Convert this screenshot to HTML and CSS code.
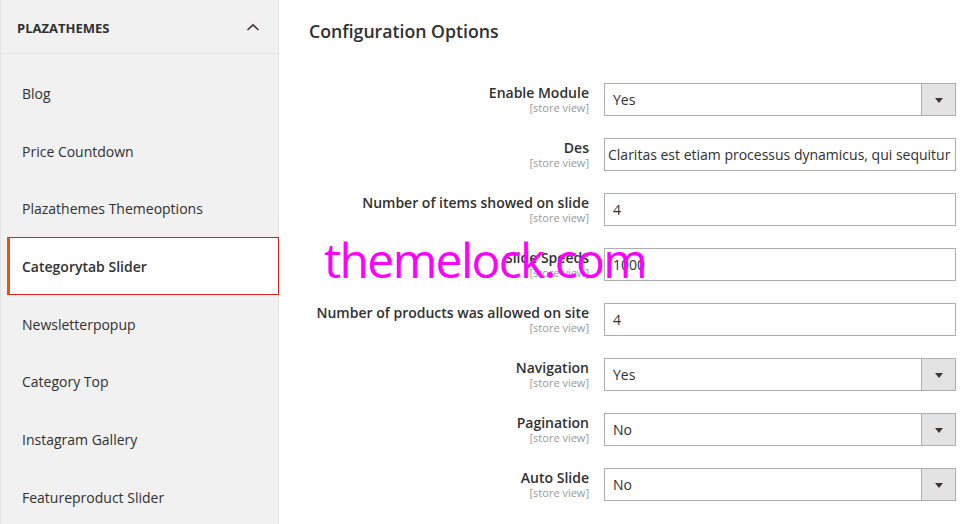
FILE: index.html
```html
<!DOCTYPE html>
<html lang="en">
<head>
<meta charset="utf-8">
<title>Configuration Options</title>
<link rel="stylesheet" href="styles.css">
</head>
<body>
<div class="page">
  <aside class="sidebar">
    <div class="side-head">
      <span class="side-title">PLAZATHEMES</span>
      <svg class="chev" width="14" height="8" viewBox="0 0 14 8"><polyline points="1.5,7 7,1.8 12.5,7" fill="none" stroke="#41362f" stroke-width="1.6"/></svg>
    </div>
    <ul class="nav">
      <li class="nav-item">Blog</li>
      <li class="nav-item">Price Countdown</li>
      <li class="nav-item">Plazathemes Themeoptions</li>
      <li class="nav-item active">Categorytab Slider</li>
      <li class="nav-item">Newsletterpopup</li>
      <li class="nav-item">Category Top</li>
      <li class="nav-item">Instagram Gallery</li>
      <li class="nav-item">Featureproduct Slider</li>
    </ul>
  </aside>
  <main class="content">
    <h2 class="title">Configuration Options</h2>
    <div class="form">
      <div class="row">
        <div class="label"><span class="lbl">Enable Module</span><span class="scope">[store view]</span></div>
        <div class="control select"><span class="val">Yes</span><span class="btn"><i class="tri"></i></span></div>
      </div>
      <div class="row">
        <div class="label"><span class="lbl">Des</span><span class="scope">[store view]</span></div>
        <div class="control scrolled"><span class="val">Claritas est etiam processus dynamicus, qui sequitur mutationem consuetudium lectorum.</span></div>
      </div>
      <div class="row">
        <div class="label"><span class="lbl">Number of items showed on slide</span><span class="scope">[store view]</span></div>
        <div class="control"><span class="val">4</span></div>
      </div>
      <div class="row">
        <div class="label"><span class="lbl">Slide Speeds</span><span class="scope">[store view]</span></div>
        <div class="control"><span class="val">1000</span></div>
      </div>
      <div class="row">
        <div class="label"><span class="lbl">Number of products was allowed on site</span><span class="scope">[store view]</span></div>
        <div class="control"><span class="val">4</span></div>
      </div>
      <div class="row">
        <div class="label"><span class="lbl">Navigation</span><span class="scope">[store view]</span></div>
        <div class="control select"><span class="val">Yes</span><span class="btn"><i class="tri"></i></span></div>
      </div>
      <div class="row">
        <div class="label"><span class="lbl">Pagination</span><span class="scope">[store view]</span></div>
        <div class="control select"><span class="val">No</span><span class="btn"><i class="tri"></i></span></div>
      </div>
      <div class="row">
        <div class="label"><span class="lbl">Auto Slide</span><span class="scope">[store view]</span></div>
        <div class="control select"><span class="val">No</span><span class="btn"><i class="tri"></i></span></div>
      </div>
    </div>
  </main>
</div>
<div class="watermark">themelock.com</div>
</body>
</html>
```
FILE: styles.css
```css
* { box-sizing: border-box; }
html, body {
  margin: 0;
  padding: 0;
  background: #fff;
  font-family: "Open Sans", "Liberation Sans", sans-serif;
  color: #303030;
  overflow: hidden;
}
.page {
  display: flex;
  align-items: stretch;
  width: 975px;
  height: 524px;
  overflow: hidden;
}
.sidebar {
  flex: 0 0 279px;
  background: #f1f1f1;
  border-left: 1px solid #e3e3e3;
  border-right: 1px solid #e3e3e3;
}
.side-head {
  height: 54px;
  display: flex;
  align-items: center;
  justify-content: space-between;
  padding: 2px 18px 0 16px;
  border-bottom: 1px solid #e3e3e3;
}
.side-title {
  font-size: 13px;
  font-weight: 700;
  color: #303030;
  letter-spacing: 0;
}
.chev { display: block; margin-top: -2px; }
.nav {
  list-style: none;
  margin: 0;
  padding: 10px 0 0 0;
}
.nav-item {
  height: 57.7px;
  display: flex;
  align-items: center;
  padding: 1px 0 0 21px;
  font-size: 14px;
  color: #303030;
}
.nav-item.active {
  background: #fff;
  margin: 0 -1px 0 6px;
  border: 1px solid #d9201f;
  border-left: 3px solid #eb5202;
  padding-left: 12px;
  font-weight: 600;
}
.content {
  flex: 1;
  padding: 19px 19px 0 30px;
}
.title {
  margin: 0 0 40px 0;
  font-size: 17.7px;
  font-weight: 600;
  line-height: 24px;
  color: #303030;
}
.form {
  display: flex;
  flex-direction: column;
  gap: 22px;
}
.row {
  display: grid;
  grid-template-columns: 1fr 352px;
  column-gap: 15px;
  height: 33px;
}
.label {
  display: flex;
  flex-direction: column;
  align-items: flex-end;
  padding-top: 1px;
  white-space: nowrap;
}
.lbl {
  font-size: 14px;
  font-weight: 600;
  line-height: 18px;
  color: #303030;
}
.scope {
  font-size: 11px;
  line-height: 12px;
  color: #999;
}
.control {
  display: flex;
  align-items: center;
  height: 33px;
  border: 1px solid #adadad;
  background: #fff;
  overflow: hidden;
  white-space: nowrap;
}
.val {
  flex: 1;
  padding-left: 8px;
  font-size: 14px;
  color: #303030;
  overflow: hidden;
}
.scrolled .val { padding-left: 3px; }
.btn {
  flex: 0 0 34px;
  height: 100%;
  background: #e3e3e3;
  border-left: 1px solid #adadad;
  display: flex;
  align-items: center;
  justify-content: center;
}
.tri {
  width: 0;
  height: 0;
  border-left: 4px solid transparent;
  border-right: 4px solid transparent;
  border-top: 5px solid #41362f;
  margin-top: 1px;
}
.watermark {
  position: absolute;
  left: 324px;
  top: 236px;
  font-family: "Open Sans", sans-serif;
  font-size: 48px;
  line-height: 48px;
  letter-spacing: -1.6px;
  color: #ff00ff;
  white-space: nowrap;
  pointer-events: none;
}
```
